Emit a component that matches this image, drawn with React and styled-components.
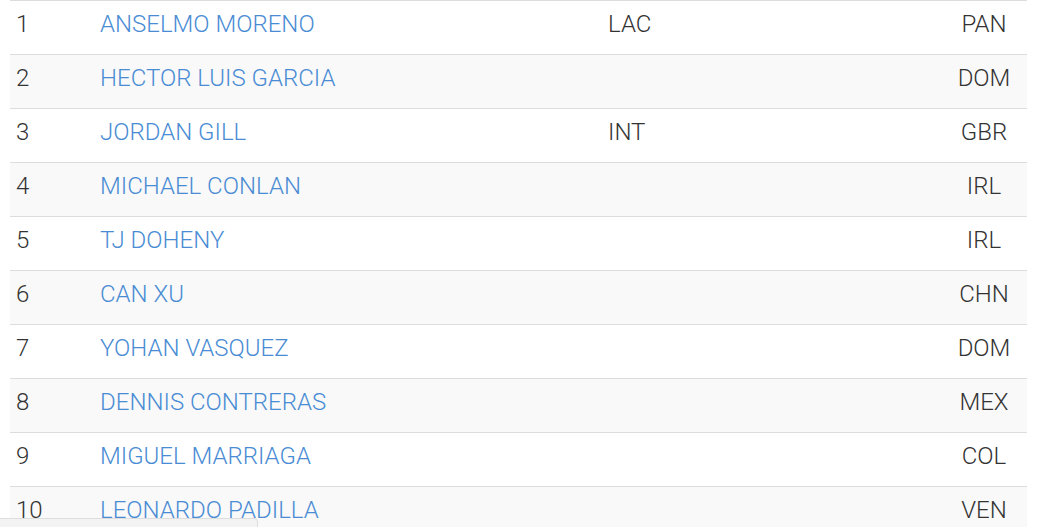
import React from "react";
import styled, { createGlobalStyle } from "styled-components";

const Global = createGlobalStyle`
  html, body { margin: 0; padding: 0; background: #fff; }
  body { font-family: Roboto, "Liberation Sans", sans-serif; font-weight: 300; color: #333; overflow: hidden; }
`;

const Page = styled.div`
  padding: 0 14px 0 10px;
  height: 527px;
  overflow: hidden;
`;

const Table = styled.table`
  width: 100%;
  border-collapse: collapse;
  font-size: 24px;
`;

const Row = styled.tr`
  background: ${(p) => (p.$striped ? "#f9f9f9" : "#fff")};
  border-top: 1px solid #ddd;
`;

const Cell = styled.td`
  height: 54px;
  padding: 10px 6px 0;
  vertical-align: top;
  box-sizing: border-box;
  line-height: 26px;
  width: ${(p) => p.$w || "auto"};
  text-align: ${(p) => p.$align || "left"};
`;

const Name = styled.a`
  color: #4a8cd4;
  text-decoration: none;
`;

const Notice = styled.div`
  position: fixed;
  left: 0;
  bottom: 0;
  width: 257px;
  height: 8px;
  background: #f3f3f3;
  border: 1px solid #ddd;
  border-left: none;
  border-bottom: none;
  border-top-right-radius: 4px;
`;

const rows = [
  ["1", "ANSELMO MORENO", "LAC", "PAN"],
  ["2", "HECTOR LUIS GARCIA", "", "DOM"],
  ["3", "JORDAN GILL", "INT", "GBR"],
  ["4", "MICHAEL CONLAN", "", "IRL"],
  ["5", "TJ DOHENY", "", "IRL"],
  ["6", "CAN XU", "", "CHN"],
  ["7", "YOHAN VASQUEZ", "", "DOM"],
  ["8", "DENNIS CONTRERAS", "", "MEX"],
  ["9", "MIGUEL MARRIAGA", "", "COL"],
  ["10", "LEONARDO PADILLA", "", "VEN"],
];

export default function App() {
  return (
    <>
      <Global />
      <Page>
        <Table>
          <tbody>
            {rows.map((r, i) => (
              <Row key={r[0]} $striped={i % 2 === 1}>
                <Cell $w="84px">{r[0]}</Cell>
                <Cell $w="508px">
                  <Name href="#">{r[1]}</Name>
                </Cell>
                <Cell>{r[2]}</Cell>
                <Cell $w="86px" $align="center">{r[3]}</Cell>
              </Row>
            ))}
          </tbody>
        </Table>
      </Page>
      <Notice />
    </>
  );
}
